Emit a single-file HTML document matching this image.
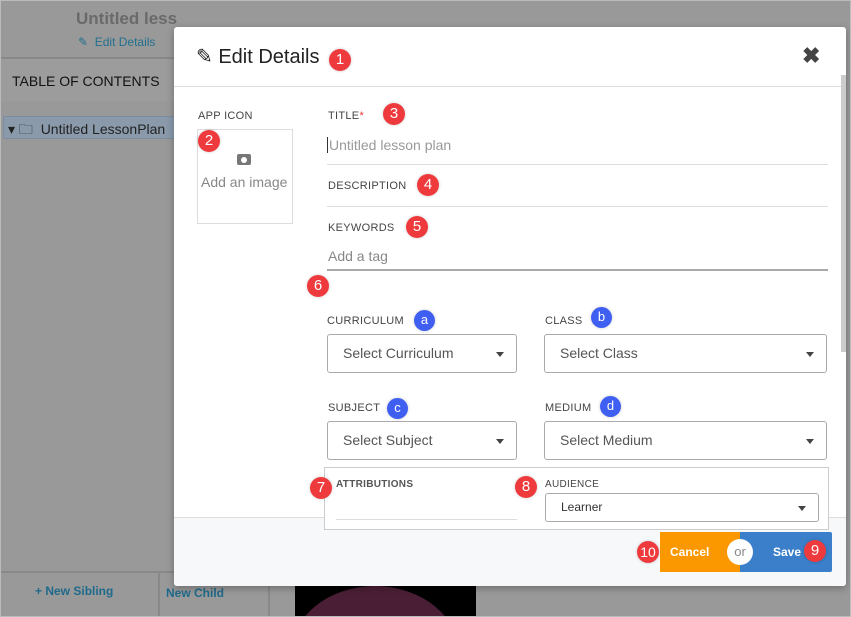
<!DOCTYPE html>
<html><head><meta charset="utf-8"><style>
*{box-sizing:border-box;margin:0;padding:0}
html,body{width:851px;height:617px;overflow:hidden}
body{background:#999;font-family:"Liberation Sans",sans-serif;position:relative}
.a{position:absolute}
.b{position:absolute;width:22px;height:22px;border-radius:50%;background:#ee3a3d;color:#fff;font-size:15px;text-align:center;line-height:22px;box-shadow:0 0 3px rgba(0,0,0,.2)}
.bl{background:#3f5ff2;width:21px;height:21px;line-height:19px;font-size:13px}
.lbl{position:absolute;font-size:11px;color:#444;letter-spacing:.3px}
.sel{position:absolute;border:1px solid #aaa;border-radius:3px;background:#fff;font-size:14px;color:#555;padding-left:15px}
.sel:after{content:"";position:absolute;right:12px;top:50%;margin-top:-2px;border:4px solid transparent;border-top:5px solid #444}
</style></head><body>
<div class="a" style="left:0;top:0;width:851px;height:617px;border:1px solid #bbb;z-index:50;pointer-events:none"></div>
<div class="a" style="left:76px;top:9px;font-size:17px;font-weight:bold;color:#6a6a6a">Untitled less</div>
<div class="a" style="left:78px;top:35px;font-size:12px;color:#23708f">✎&nbsp; Edit Details</div>
<div class="a" style="left:0;top:57px;width:174px;height:2px;background:#888"></div>
<div class="a" style="left:0;top:59px;width:174px;height:42px;background:#9c9c9c"></div>
<div class="a" style="left:12px;top:73px;font-size:14px;color:#111">TABLE OF CONTENTS</div>
<div class="a" style="left:3px;top:116px;width:175px;height:23px;background:#8a9aab;border:1px solid #7b8ca0;border-radius:2px"></div>
<div class="a" style="left:8px;top:119px;font-size:14px;color:#222">▾ 🗀&nbsp; Untitled LessonPlan</div>
<div class="a" style="left:0;top:571px;width:300px;height:2px;background:#888"></div>
<div class="a" style="left:158px;top:573px;width:2px;height:44px;background:#888"></div>
<div class="a" style="left:268px;top:573px;width:2px;height:44px;background:#888"></div>
<div class="a" style="left:35px;top:584px;font-size:12px;font-weight:bold;color:#1f6a8a">+ New Sibling</div>
<div class="a" style="left:166px;top:586px;font-size:12px;font-weight:bold;color:#1f6a8a">New Child</div>
<div class="a" style="left:295px;top:586px;width:181px;height:31px;background:#000;overflow:hidden"><div style="position:absolute;left:-5px;top:0;width:170px;height:140px;border-radius:50%;background:#4a1f35"></div></div>

<div class="a" style="left:174px;top:27px;width:672px;height:559px;background:#fff;border-radius:3px;box-shadow:0 2px 8px rgba(0,0,0,.3);overflow:hidden">
 <div class="a" style="left:0;top:59px;width:672px;height:1px;background:#ddd"></div>
 <div class="a" style="left:22px;top:17px;font-size:20px;color:#222">✎ Edit Details</div>
 <div class="a" style="left:628px;top:16px;font-size:22px;font-weight:bold;color:#444">✖</div>
 <div class="a" style="left:667px;top:48px;width:5px;height:277px;background:#ccc"></div>
 <div class="a" style="left:0;top:490px;width:672px;height:69px;background:#f7f8fa;border-top:1px solid #ddd"></div>
</div>
<div class="b" style="left:329px;top:49px">1</div>

<div class="lbl" style="left:198px;top:110px">APP ICON</div>
<div class="a" style="left:197px;top:129px;width:96px;height:95px;border:1px solid #ddd"></div>
<div class="a" style="left:237px;top:154px;width:14px;height:11px;background:#777;border-radius:2px"><div style="position:absolute;left:4px;top:3px;width:6px;height:6px;border-radius:50%;background:#fff"></div></div>
<div class="a" style="left:201px;top:174px;font-size:14px;color:#888">Add an image</div>
<div class="b" style="left:198px;top:130px">2</div>

<div class="lbl" style="left:328px;top:110px">TITLE<span style="color:#e33">*</span></div>
<div class="b" style="left:383px;top:103px">3</div>
<div class="a" style="left:327px;top:137px;font-size:14px;color:#999;border-left:1px solid #333;padding-left:1px">Untitled lesson plan</div>
<div class="a" style="left:327px;top:164px;width:501px;height:1px;background:#ddd"></div>
<div class="lbl" style="left:328px;top:180px">DESCRIPTION</div>
<div class="b" style="left:417px;top:174px">4</div>
<div class="a" style="left:327px;top:206px;width:501px;height:1px;background:#ddd"></div>
<div class="lbl" style="left:328px;top:222px">KEYWORDS</div>
<div class="b" style="left:406px;top:216px">5</div>
<div class="a" style="left:328px;top:248px;font-size:14px;color:#888">Add a tag</div>
<div class="a" style="left:327px;top:269px;width:501px;height:2px;background:#aaa"></div>
<div class="b" style="left:307px;top:275px">6</div>

<div class="lbl" style="left:327px;top:315px">CURRICULUM</div>
<div class="b bl" style="left:414px;top:310px">a</div>
<div class="lbl" style="left:545px;top:315px">CLASS</div>
<div class="b bl" style="left:591px;top:307px">b</div>
<div class="sel" style="left:327px;top:334px;width:190px;height:39px;line-height:37px">Select Curriculum</div>
<div class="sel" style="left:544px;top:334px;width:283px;height:39px;line-height:37px">Select Class</div>
<div class="lbl" style="left:328px;top:402px">SUBJECT</div>
<div class="b bl" style="left:387px;top:398px">c</div>
<div class="lbl" style="left:545px;top:402px">MEDIUM</div>
<div class="b bl" style="left:600px;top:396px">d</div>
<div class="sel" style="left:327px;top:421px;width:190px;height:39px;line-height:37px">Select Subject</div>
<div class="sel" style="left:544px;top:421px;width:283px;height:39px;line-height:37px">Select Medium</div>

<div class="a" style="left:324px;top:467px;width:505px;height:63px;border:1px solid #ccc;background:#fff"></div>
<div class="lbl" style="left:336px;top:479px;font-size:10px;font-weight:bold;color:#555">ATTRIBUTIONS</div>
<div class="a" style="left:336px;top:519px;width:181px;height:1px;background:#ddd"></div>
<div class="lbl" style="left:545px;top:479px;font-size:10px;color:#444">AUDIENCE</div>
<div class="sel" style="left:545px;top:493px;width:274px;height:29px;line-height:27px;font-size:12px;color:#333">Learner</div>
<div class="b" style="left:310px;top:477px">7</div>
<div class="b" style="left:515px;top:476px">8</div>

<div class="a" style="left:660px;top:532px;width:80px;height:40px;background:#fb9800;color:#fff;font-size:12px;font-weight:bold;line-height:40px;padding-left:10px">Cancel</div>
<div class="a" style="left:740px;top:532px;width:92px;height:40px;background:#3b7fca;border-radius:0 2px 2px 0;color:#fff;font-size:12px;font-weight:bold;line-height:40px;padding-left:33px">Save</div>
<div class="a" style="left:727px;top:539px;width:26px;height:26px;border-radius:50%;background:#fff;color:#888;font-size:13px;text-align:center;line-height:26px">or</div>
<div class="b" style="left:637px;top:541px;font-size:14px">10</div>
<div class="b" style="left:804px;top:540px">9</div>
</body></html>
